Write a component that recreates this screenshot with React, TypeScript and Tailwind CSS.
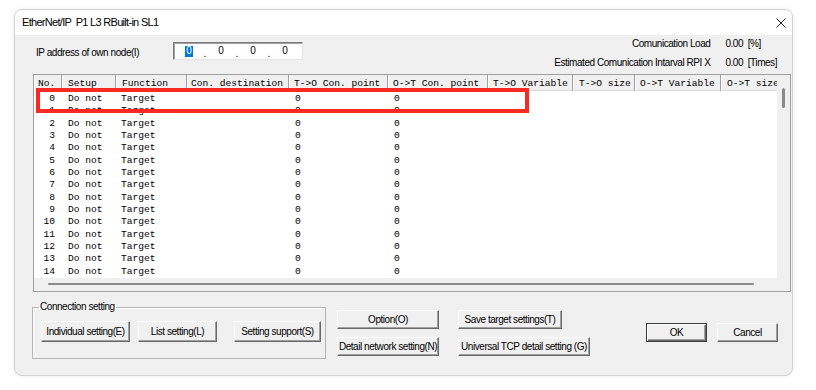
import React from "react";

const UI = "font-['Liberation_Sans',Arial,sans-serif]";
const MONO = "font-['Liberation_Mono','Courier_New',monospace]";

const cols = [
  { label: "No.", w: "w-[28px] pl-[4px]" },
  { label: "Setup", w: "w-[54px] pl-[6px]" },
  { label: "Function", w: "w-[71px] pl-[6px]" },
  { label: "Con. destination", w: "w-[102px] pl-[4px]" },
  { label: "T->O Con. point", w: "w-[99px] pl-[5px]" },
  { label: "O->T Con. point", w: "w-[100px] pl-[5px]" },
  { label: "T->O Variable", w: "w-[85px] pl-[5px]" },
  { label: "T->O size", w: "w-[62px] pl-[6px]" },
  { label: "O->T Variable", w: "w-[86px] pl-[5px]" },
  { label: "O->T size", w: "w-[90px] pl-[6px]" },
];

const rows = Array.from({ length: 15 }, (_, i) => i);

function Btn({ children, className }: { children: React.ReactNode; className: string }) {
  return (
    <div
      className={`flex items-center justify-center bg-[#f0f0f0] border border-t-white border-l-white border-r-[#696969] border-b-[#696969] shadow-[inset_-1px_-1px_0_#a0a0a0] text-[10px] tracking-[-0.45px] leading-none text-black whitespace-nowrap ${className}`}
    >
      {children}
    </div>
  );
}

export default function App() {
  return (
    <div className={`relative w-[816px] h-[390px] bg-white pt-[9px] pl-[14px] overflow-hidden ${UI}`}>
      <div className="w-[779px] h-[367px] rounded-[8px] border border-[#d2d2d2] overflow-hidden flex flex-col bg-[#f0f0f0] shadow-[0_0_4px_rgba(0,0,0,0.08)]">
        {/* Title bar */}
        <div className="h-[25px] shrink-0 bg-white flex items-center justify-between pl-[7px] pr-[6px]">
          <span className="text-[11px] tracking-[-0.7px] leading-none text-black whitespace-pre">EtherNet/IP  P1 L3 RBuilt-in SL1</span>
          <svg width="10" height="10" viewBox="0 0 10 10" className="mt-[1px]">
            <path d="M0.5 0.5 L9.5 9.5 M9.5 0.5 L0.5 9.5" stroke="#222" strokeWidth="1" fill="none" />
          </svg>
        </div>

        {/* Body */}
        <div className="flex-1 flex flex-col">
          {/* top row */}
          <div className="h-[39px] shrink-0 flex justify-between pr-[15px]">
            <div className="flex items-start pl-[21px]">
              <div className="w-[137px] mt-[11px] text-[10px] tracking-[-0.45px] leading-[14px] text-black">IP address of own node(I)</div>
              <div className="mt-[7px] w-[130px] h-[18px] bg-white border border-t-[#7a7a7a] border-l-[#7a7a7a] border-r-[#e3e3e3] border-b-[#e3e3e3] shadow-[inset_1px_1px_0_#a0a0a0] flex items-center pl-[7px] text-[10px] leading-none text-black">
                <span className="w-[16px] flex justify-center">
                  <span className="bg-[#0078d7] text-white px-[1px] h-[11px] flex items-center">0</span>
                </span>
                <span className="w-[16px] text-center pt-[6px]">.</span>
                <span className="w-[16px] text-center">0</span>
                <span className="w-[16px] text-center pt-[6px]">.</span>
                <span className="w-[16px] text-center">0</span>
                <span className="w-[16px] text-center pt-[6px]">.</span>
                <span className="w-[16px] text-center">0</span>
              </div>
            </div>
            <div className="pt-[1px] grid grid-cols-[auto_auto] gap-x-[15px] text-[10px] tracking-[-0.45px] leading-[15px] text-black">
              <span className="text-right">Comunication Load</span>
              <span className="whitespace-pre">0.00  [%]</span>
              <span className="text-right">Estimated Comunication Intarval RPI X</span>
              <span className="whitespace-pre">0.00  [Times]</span>
            </div>
          </div>

          {/* table frame */}
          <div className="ml-[18px] w-[758px] h-[218px] shrink-0 border border-[#a0a0a0] flex flex-col">
            <div className="flex h-[203px]">
              <div className={`w-[743px] h-[203px] bg-white overflow-hidden flex flex-col ${MONO} text-[9.6px] text-black`}>
                <div className="flex h-[16px] shrink-0">
                  {cols.map((c) => (
                    <div
                      key={c.label}
                      className={`${c.w} shrink-0 h-[16px] bg-[#f0f0f0] border-r border-[#a0a0a0] shadow-[inset_1px_0_0_#fff,inset_0_-1px_0_#d8d8d8] flex items-center pt-[1px] leading-none whitespace-pre overflow-hidden`}
                    >
                      {c.label}
                    </div>
                  ))}
                </div>
                <div className="mt-[1.5px] flex flex-col">
                  {rows.map((i) => (
                    <div key={i} className="flex h-[12.35px] items-center leading-none whitespace-pre">
                      <div className="w-[28px] shrink-0 text-right pr-[7px]">{i}</div>
                      <div className="w-[54px] shrink-0 pl-[6px]">Do not</div>
                      <div className="w-[71px] shrink-0 pl-[5px]">Target</div>
                      <div className="w-[102px] shrink-0"></div>
                      <div className="w-[99px] shrink-0 pl-[6px]">0</div>
                      <div className="w-[100px] shrink-0 pl-[6px]">0</div>
                    </div>
                  ))}
                </div>
              </div>
              <div className="w-[13px] h-[203px] bg-[#f0f0f0] flex justify-center">
                <div className="mt-[13px] w-[3px] h-[20px] rounded-full bg-[#8b8b8b]"></div>
              </div>
            </div>
            <div className="h-[13px] bg-[#f0f0f0] pl-[14px] pt-[5px]">
              <div className="w-[706px] h-[2px] rounded-full bg-[#8b8b8b]"></div>
            </div>
          </div>

          {/* bottom */}
          <div className="flex items-start pl-[17px]">
            <fieldset className="mt-[8px] w-[294px] h-[59px] border border-[#b4b4b4] shadow-[inset_1px_1px_0_#fff]">
              <legend className="ml-[6px] px-[1px] text-[10px] tracking-[-0.45px] leading-[14px] text-black">Connection setting</legend>
              <div className="flex mt-[7px] pl-[8px]">
                <Btn className="w-[89px] h-[21px]">Individual setting(E)</Btn>
                <Btn className="ml-[8px] w-[79px] h-[21px]">List setting(L)</Btn>
                <Btn className="ml-[17px] w-[87px] h-[21px]">Setting support(S)</Btn>
              </div>
            </fieldset>
            <div className="ml-[11px] mt-[18px] flex flex-col gap-[8px]">
              <Btn className="w-[102px] h-[19px]">Option(O)</Btn>
              <Btn className="w-[102px] h-[19px]">Detail network setting(N)</Btn>
            </div>
            <div className="ml-[19px] mt-[18px] flex flex-col items-start gap-[8px]">
              <Btn className="w-[104px] h-[19px]">Save target settings(T)</Btn>
              <Btn className="w-[132px] h-[19px]">Universal TCP detail setting (G)</Btn>
            </div>
            <div className="ml-[56px] mt-[31px] w-[61px] h-[19px] flex items-center justify-center bg-[#f0f0f0] border border-[#3c3c3c] shadow-[inset_1px_1px_0_#fff,inset_-1px_-1px_0_#696969,inset_-2px_-2px_0_#a0a0a0] text-[10px] tracking-[-0.45px] leading-none text-black">
              OK
            </div>
            <Btn className="ml-[10px] mt-[31px] w-[61px] h-[19px]">Cancel</Btn>
          </div>
        </div>
      </div>

      {/* annotation overlay */}
      <div className="absolute left-[36px] top-[88px] w-[493px] h-[25px] border-[4px] border-[#f92a24]"></div>
    </div>
  );
}
